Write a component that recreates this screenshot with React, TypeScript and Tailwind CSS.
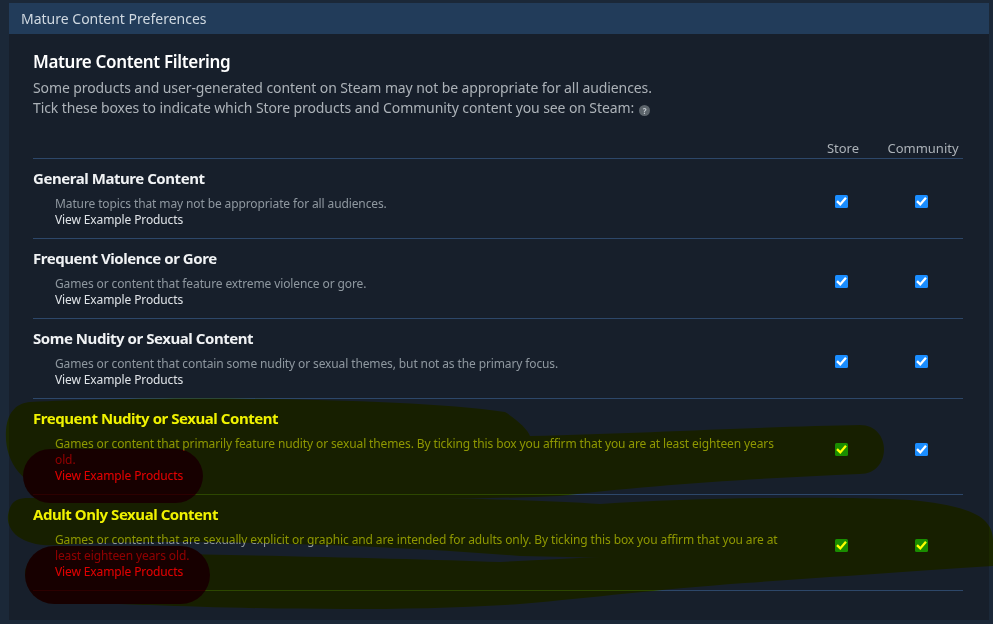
import React from 'react';

type Row = {
  title: string;
  desc: string;
  store: boolean;
  community: boolean;
};

const rows: Row[] = [
  {
    title: 'General Mature Content',
    desc: 'Mature topics that may not be appropriate for all audiences.',
    store: true,
    community: true,
  },
  {
    title: 'Frequent Violence or Gore',
    desc: 'Games or content that feature extreme violence or gore.',
    store: true,
    community: true,
  },
  {
    title: 'Some Nudity or Sexual Content',
    desc: 'Games or content that contain some nudity or sexual themes, but not as the primary focus.',
    store: true,
    community: true,
  },
  {
    title: 'Frequent Nudity or Sexual Content',
    desc: 'Games or content that primarily feature nudity or sexual themes. By ticking this box you affirm that you are at least eighteen years old.',
    store: true,
    community: true,
  },
  {
    title: 'Adult Only Sexual Content',
    desc: 'Games or content that are sexually explicit or graphic and are intended for adults only. By ticking this box you affirm that you are at least eighteen years old.',
    store: true,
    community: true,
  },
];

function Checkbox({ checked }: { checked: boolean }) {
  return (
    <svg width="13" height="13" viewBox="0 0 13 13" className="mt-[7px] block">
      <rect x="0" y="0" width="13" height="13" rx="1.5" fill="#1a8dff" />
      {checked && (
        <path d="M2.8 6.9 L5.3 9.4 L10.2 3.6" fill="none" stroke="#ffffff" strokeWidth="2.3" strokeLinecap="square" />
      )}
    </svg>
  );
}

function HelpIcon() {
  return (
    <span className="ml-[5px] inline-block h-[11px] w-[11px] rounded-full bg-[#5c646b] text-center align-[-1px] text-[8px] font-bold leading-[11px] text-[#c3c9ce]">
      ?
    </span>
  );
}

// highlighter marks drawn over the page
function Scribbles() {
  return (
    <svg
      width="993"
      height="624"
      viewBox="0 0 993 624"
      className="pointer-events-none absolute left-0 top-0 mix-blend-multiply"
    >
      <path
        fill="#ffff00"
        d="M30 402 C150 396 400 397 505 412 C518 420 528 430 530 436 C650 433 780 426 860 425 C892 425 892 474 860 474 C760 478 640 486 560 496 C400 502 200 500 60 494 C20 486 4 460 6 430 C8 410 18 403 30 402 Z"
      />
      <path
        fill="#ffff00"
        d="M25 498 C200 495 500 496 600 504 C700 497 850 496 910 500 C960 505 993 513 993 540 L993 566 L520 556 C350 542 150 539 60 545 C20 548 6 530 8 515 C10 503 15 499 25 498 Z"
      />
      <path
        fill="#ffff00"
        d="M60 552 C200 554 400 558 500 562 L700 552 L993 552 L993 566 C900 572 833 577 745 583 C650 590 600 597 520 604 C400 612 250 609 150 605 C80 604 26 598 25 575 C24 560 40 552 60 552 Z"
      />
      <rect x="23" y="449" width="180" height="54" rx="27" fill="#ff0000" />
      <rect x="25" y="546" width="185" height="58" rx="29" fill="#ff0000" />
    </svg>
  );
}

export default function App() {
  return (
    <div className="relative h-[624px] w-full overflow-hidden bg-[#1b2838] pt-[3px] font-['Noto_Sans',sans-serif]">
      <div className="ml-[9px] w-[980px]">
        {/* Header */}
        <div className="flex h-[31px] items-center bg-[#223c5a] px-[12px] text-[14px] text-[#d0d9e1]">
          Mature Content Preferences
        </div>

        {/* Body */}
        <div className="bg-[#171f2b] pb-[29px] pl-[24px] pr-[26px] pt-[16px]">
          <h2 className="text-[17px] font-semibold leading-[24px] tracking-[-0.02em] text-[#ffffff]">
            Mature Content Filtering
          </h2>
          <p className="mt-[4px] text-[14px] leading-[20px] tracking-[-0.007em] text-[#acb2b8]">
            Some products and user-generated content on Steam may not be appropriate for all audiences.
            <br />
            Tick these boxes to indicate which Store products and Community content you see on Steam:
            <HelpIcon />
          </p>

          <div className="mt-[22px] flex pb-[2px] text-[13px] leading-[16px] text-[#acb2b8]">
            <div className="flex-1" />
            <div className="w-[80px] text-center">Store</div>
            <div className="w-[80px] text-center">Community</div>
          </div>

          <div className="border-b border-[#2d4769]">
            {rows.map((row) => (
              <div key={row.title} className="flex border-t border-[#2d4769] pb-[10px] pt-[9px]">
                <div className="flex-1 pr-[8px]">
                  <div className="text-[15px] font-bold leading-[20px] tracking-[-0.03em] text-[#f0f2f4]">
                    {row.title}
                  </div>
                  <div className="mt-[8px] pl-[22px] text-[12px] leading-[16px] tracking-[-0.01em]">
                    <div className="text-[#8f98a0]">{row.desc}</div>
                    <div className="text-[#e0e4e8]">View Example Products</div>
                  </div>
                </div>
                <div className="flex w-[80px] items-center justify-center pr-[4px]">
                  <Checkbox checked={row.store} />
                </div>
                <div className="flex w-[80px] items-center justify-center pr-[4px]">
                  <Checkbox checked={row.community} />
                </div>
              </div>
            ))}
          </div>
        </div>
      </div>
      <Scribbles />
    </div>
  );
}
